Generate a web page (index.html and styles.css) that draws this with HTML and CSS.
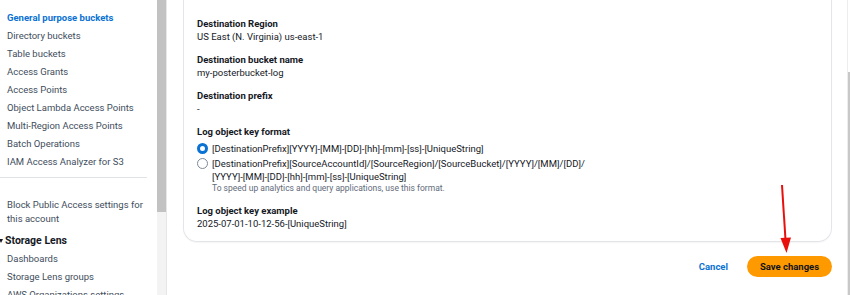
FILE: index.html
```html
<!DOCTYPE html>
<html>
<head>
<meta charset="utf-8">
<link rel="stylesheet" href="styles.css">
</head>
<body>
<div class="page">
  <nav class="sidebar">
    <ul class="nav-list">
      <li class="nav-item active">General purpose buckets</li>
      <li class="nav-item">Directory buckets</li>
      <li class="nav-item">Table buckets</li>
      <li class="nav-item">Access Grants</li>
      <li class="nav-item">Access Points</li>
      <li class="nav-item">Object Lambda Access Points</li>
      <li class="nav-item">Multi-Region Access Points</li>
      <li class="nav-item">Batch Operations</li>
      <li class="nav-item">IAM Access Analyzer for S3</li>
    </ul>
    <hr class="nav-divider">
    <div class="nav-item multi">Block Public Access settings for<br>this account</div>
    <div class="nav-section"><span class="caret"></span>Storage Lens</div>
    <ul class="nav-list">
      <li class="nav-item">Dashboards</li>
      <li class="nav-item">Storage Lens groups</li>
      <li class="nav-item">AWS Organizations settings</li>
    </ul>
  </nav>
  <div class="side-scroll"><div class="thumb"></div><div class="track"></div></div>
  <main class="main">
    <section class="card">
      <div class="hint top-hint">Format: s3://&lt;bucket&gt;/&lt;optional-prefix-with-path&gt;</div>
      <div class="field">
        <div class="label">Destination Region</div>
        <div class="value">US East (N. Virginia) us-east-1</div>
      </div>
      <div class="field">
        <div class="label">Destination bucket name</div>
        <div class="value">my-posterbucket-log</div>
      </div>
      <div class="field">
        <div class="label">Destination prefix</div>
        <div class="value">-</div>
      </div>
      <div class="field">
        <div class="label">Log object key format</div>
        <div class="radio-row first">
          <span class="radio checked"></span>
          <div class="value">[DestinationPrefix][YYYY]-[MM]-[DD]-[hh]-[mm]-[ss]-[UniqueString]</div>
        </div>
        <div class="radio-row">
          <span class="radio"></span>
          <div>
            <div class="value">[DestinationPrefix][SourceAccountId]/[SourceRegion]/[SourceBucket]/[YYYY]/[MM]/[DD]/<br>[YYYY]-[MM]-[DD]-[hh]-[mm]-[ss]-[UniqueString]</div>
            <div class="hint">To speed up analytics and query applications, use this format.</div>
          </div>
        </div>
      </div>
      <div class="field example">
        <div class="label">Log object key example</div>
        <div class="value">2025-07-01-10-12-56-[UniqueString]</div>
      </div>
    </section>
    <div class="actions">
      <span class="cancel">Cancel</span>
      <span class="save">Save changes</span>
      <svg class="arrow" width="20" height="72" viewBox="0 0 20 72">
        <line x1="6" y1="1" x2="9.5" y2="56" stroke="#e8100c" stroke-width="2"/>
        <polygon points="4.5,54 15,53.5 10.5,69" fill="#e8100c"/>
      </svg>
    </div>
  </main>
  <div class="main-scroll"><div class="mthumb"></div></div>
</div>
</body>
</html>
```
FILE: styles.css
```css
* { box-sizing: border-box; }
html, body { margin: 0; padding: 0; background: #fff; }
body {
  font-family: Roboto, "Liberation Sans", Arial, sans-serif;
  color: #16191f;
  width: 850px;
  height: 295px;
  overflow: hidden;
}
.page {
  display: flex;
  height: 295px;
}
.sidebar {
  width: 157px;
  flex: none;
  padding-top: 11px;
  font-size: 9.5px;
  color: #414d5c;
}
.nav-list { list-style: none; margin: 0; padding: 0; }
.nav-item {
  padding-left: 7px;
  height: 18px;
  line-height: 13px;
  white-space: nowrap;
}
.nav-item.active { color: #0972d3; font-weight: bold; }
.nav-item.multi { height: auto; line-height: 14px; margin-bottom: 7px; }
.nav-divider {
  border: 0;
  border-top: 1px solid #e0e2e4;
  margin: 4px 10px 20px 0;
}
.nav-section {
  font-size: 10.5px;
  font-weight: bold;
  color: #16191f;
  height: 19px;
  line-height: 14px;
  display: flex;
  align-items: flex-start;
  padding-top: 1px;
}
.caret {
  width: 0;
  height: 0;
  border-left: 2.5px solid transparent;
  border-right: 2.5px solid transparent;
  border-top: 4px solid #16191f;
  margin: 5px 2px 0 -1px;
}
.side-scroll {
  width: 10px;
  flex: none;
  display: flex;
  flex-direction: column;
  border-right: 1px solid #e6e6e6;
}
.thumb { height: 212px; background: #c2c2c2; }
.track { flex: 1; background: #f3f3f3; }
.main {
  flex: 1;
  padding-left: 16px;
  display: flex;
  flex-direction: column;
}
.card {
  width: 649px;
  margin-top: -12px;
  height: 254px;
  border: 1px solid #e3e5e8;
  border-top: 0;
  border-radius: 0 0 14px 14px;
  padding: 0 0 0 13px;
  box-shadow: 0 1px 1px rgba(0,0,0,0.04);
}
.top-hint { margin-bottom: 17px; height: 12px; }
.field { margin-bottom: 10px; }
.field.example { margin-top: 10px; }
.label {
  font-weight: bold;
  font-size: 9.5px;
  line-height: 13px;
  color: #16191f;
}
.value {
  font-size: 9.5px;
  line-height: 13px;
  color: #16191f;
}
.hint {
  font-size: 8.5px;
  color: #5f6b7a;
  line-height: 11px;
}
.radio-row {
  display: flex;
  align-items: flex-start;
  gap: 4px;
  margin-top: 2px;
}
.radio-row.first { margin-top: 4px; }
.radio {
  width: 11px;
  height: 11px;
  border-radius: 50%;
  border: 1.5px solid #7d8998;
  flex: none;
  margin-top: 1px;
  background: #fff;
}
.radio.checked {
  border: 3.5px solid #0972d3;
}
.actions {
  position: relative;
  width: 649px;
  display: flex;
  justify-content: flex-end;
  align-items: center;
  margin-top: 14px;
  gap: 19px;
}
.cancel {
  color: #0972d3;
  font-weight: bold;
  font-size: 9.5px;
}
.save {
  background: #ff9900;
  color: #0f141a;
  font-weight: bold;
  font-size: 9.5px;
  height: 21px;
  width: 85px;
  border-radius: 11px;
  display: flex;
  align-items: center;
  justify-content: center;
}
.arrow {
  position: absolute;
  left: 593px;
  top: -72px;
}
.main-scroll {
  width: 3px;
  flex: none;
  border-left: 1px solid #ededed;
  display: flex;
  flex-direction: column;
}
.mthumb { margin-top: 72px; flex: 1; background: #c8c8c8; }
```
